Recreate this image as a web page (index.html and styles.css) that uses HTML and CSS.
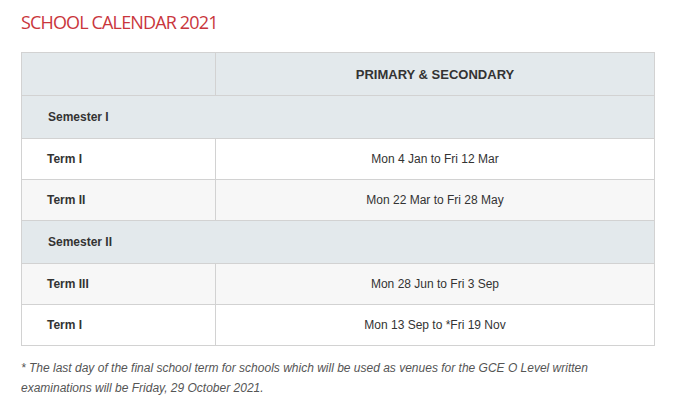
FILE: index.html
```html
<!DOCTYPE html>
<html>
<head>
<meta charset="utf-8">
<link rel="stylesheet" href="styles.css">
</head>
<body>
<div class="page">
  <h2 class="title">SCHOOL CALENDAR 2021</h2>
  <table class="cal">
    <colgroup><col class="c1"><col class="c2"></colgroup>
    <thead>
      <tr class="head"><th></th><th>PRIMARY &amp; SECONDARY</th></tr>
    </thead>
    <tbody>
      <tr class="sem"><td colspan="2">Semester I</td></tr>
      <tr class="odd"><td class="lbl">Term I</td><td class="val">Mon 4 Jan to Fri 12 Mar</td></tr>
      <tr class="even"><td class="lbl">Term II</td><td class="val">Mon 22 Mar to Fri 28 May</td></tr>
      <tr class="sem"><td colspan="2">Semester II</td></tr>
      <tr class="even"><td class="lbl">Term III</td><td class="val">Mon 28 Jun to Fri 3 Sep</td></tr>
      <tr class="odd"><td class="lbl">Term I</td><td class="val">Mon 13 Sep to *Fri 19 Nov</td></tr>
    </tbody>
  </table>
  <p class="note">* The last day of the final school term for schools which will be used as venues for the GCE O Level written examinations will be Friday, 29 October 2021.</p>
</div>
</body>
</html>
```
FILE: styles.css
```css
html, body { margin: 0; padding: 0; background: #fff; }
.page { padding: 12px 21px 0 21px; width: 634px; font-family: "Liberation Sans", Arial, sans-serif; }
.title { margin: 0 0 19px 0; font-family: "Open Sans", sans-serif; font-weight: 500; font-size: 18px; line-height: 21px; color: #c9363c; letter-spacing: -0.85px; }
.cal { width: 634px; border-collapse: collapse; table-layout: fixed; border: 1px solid #d2d2d2; }
.c1 { width: 194px; }
.cal th, .cal td { border: 1px solid #d2d2d2; height: 40px; padding: 0; font-size: 12px; color: #333; }
.head th { background: #e3e9ec; font-size: 13px; font-weight: bold; color: #333; text-align: center; height: 42px; }
.sem td { background: #e3e9ec; font-weight: bold; padding-left: 26px; font-size: 12px; height: 42px; }
.odd td { background: #fff; }
.even td { background: #f7f7f7; }
.lbl { font-weight: bold; padding-left: 25px !important; }
.val { text-align: center; }
.note { margin: 12px 0 0 0; font-size: 12px; line-height: 20px; font-style: italic; color: #555; }
```
